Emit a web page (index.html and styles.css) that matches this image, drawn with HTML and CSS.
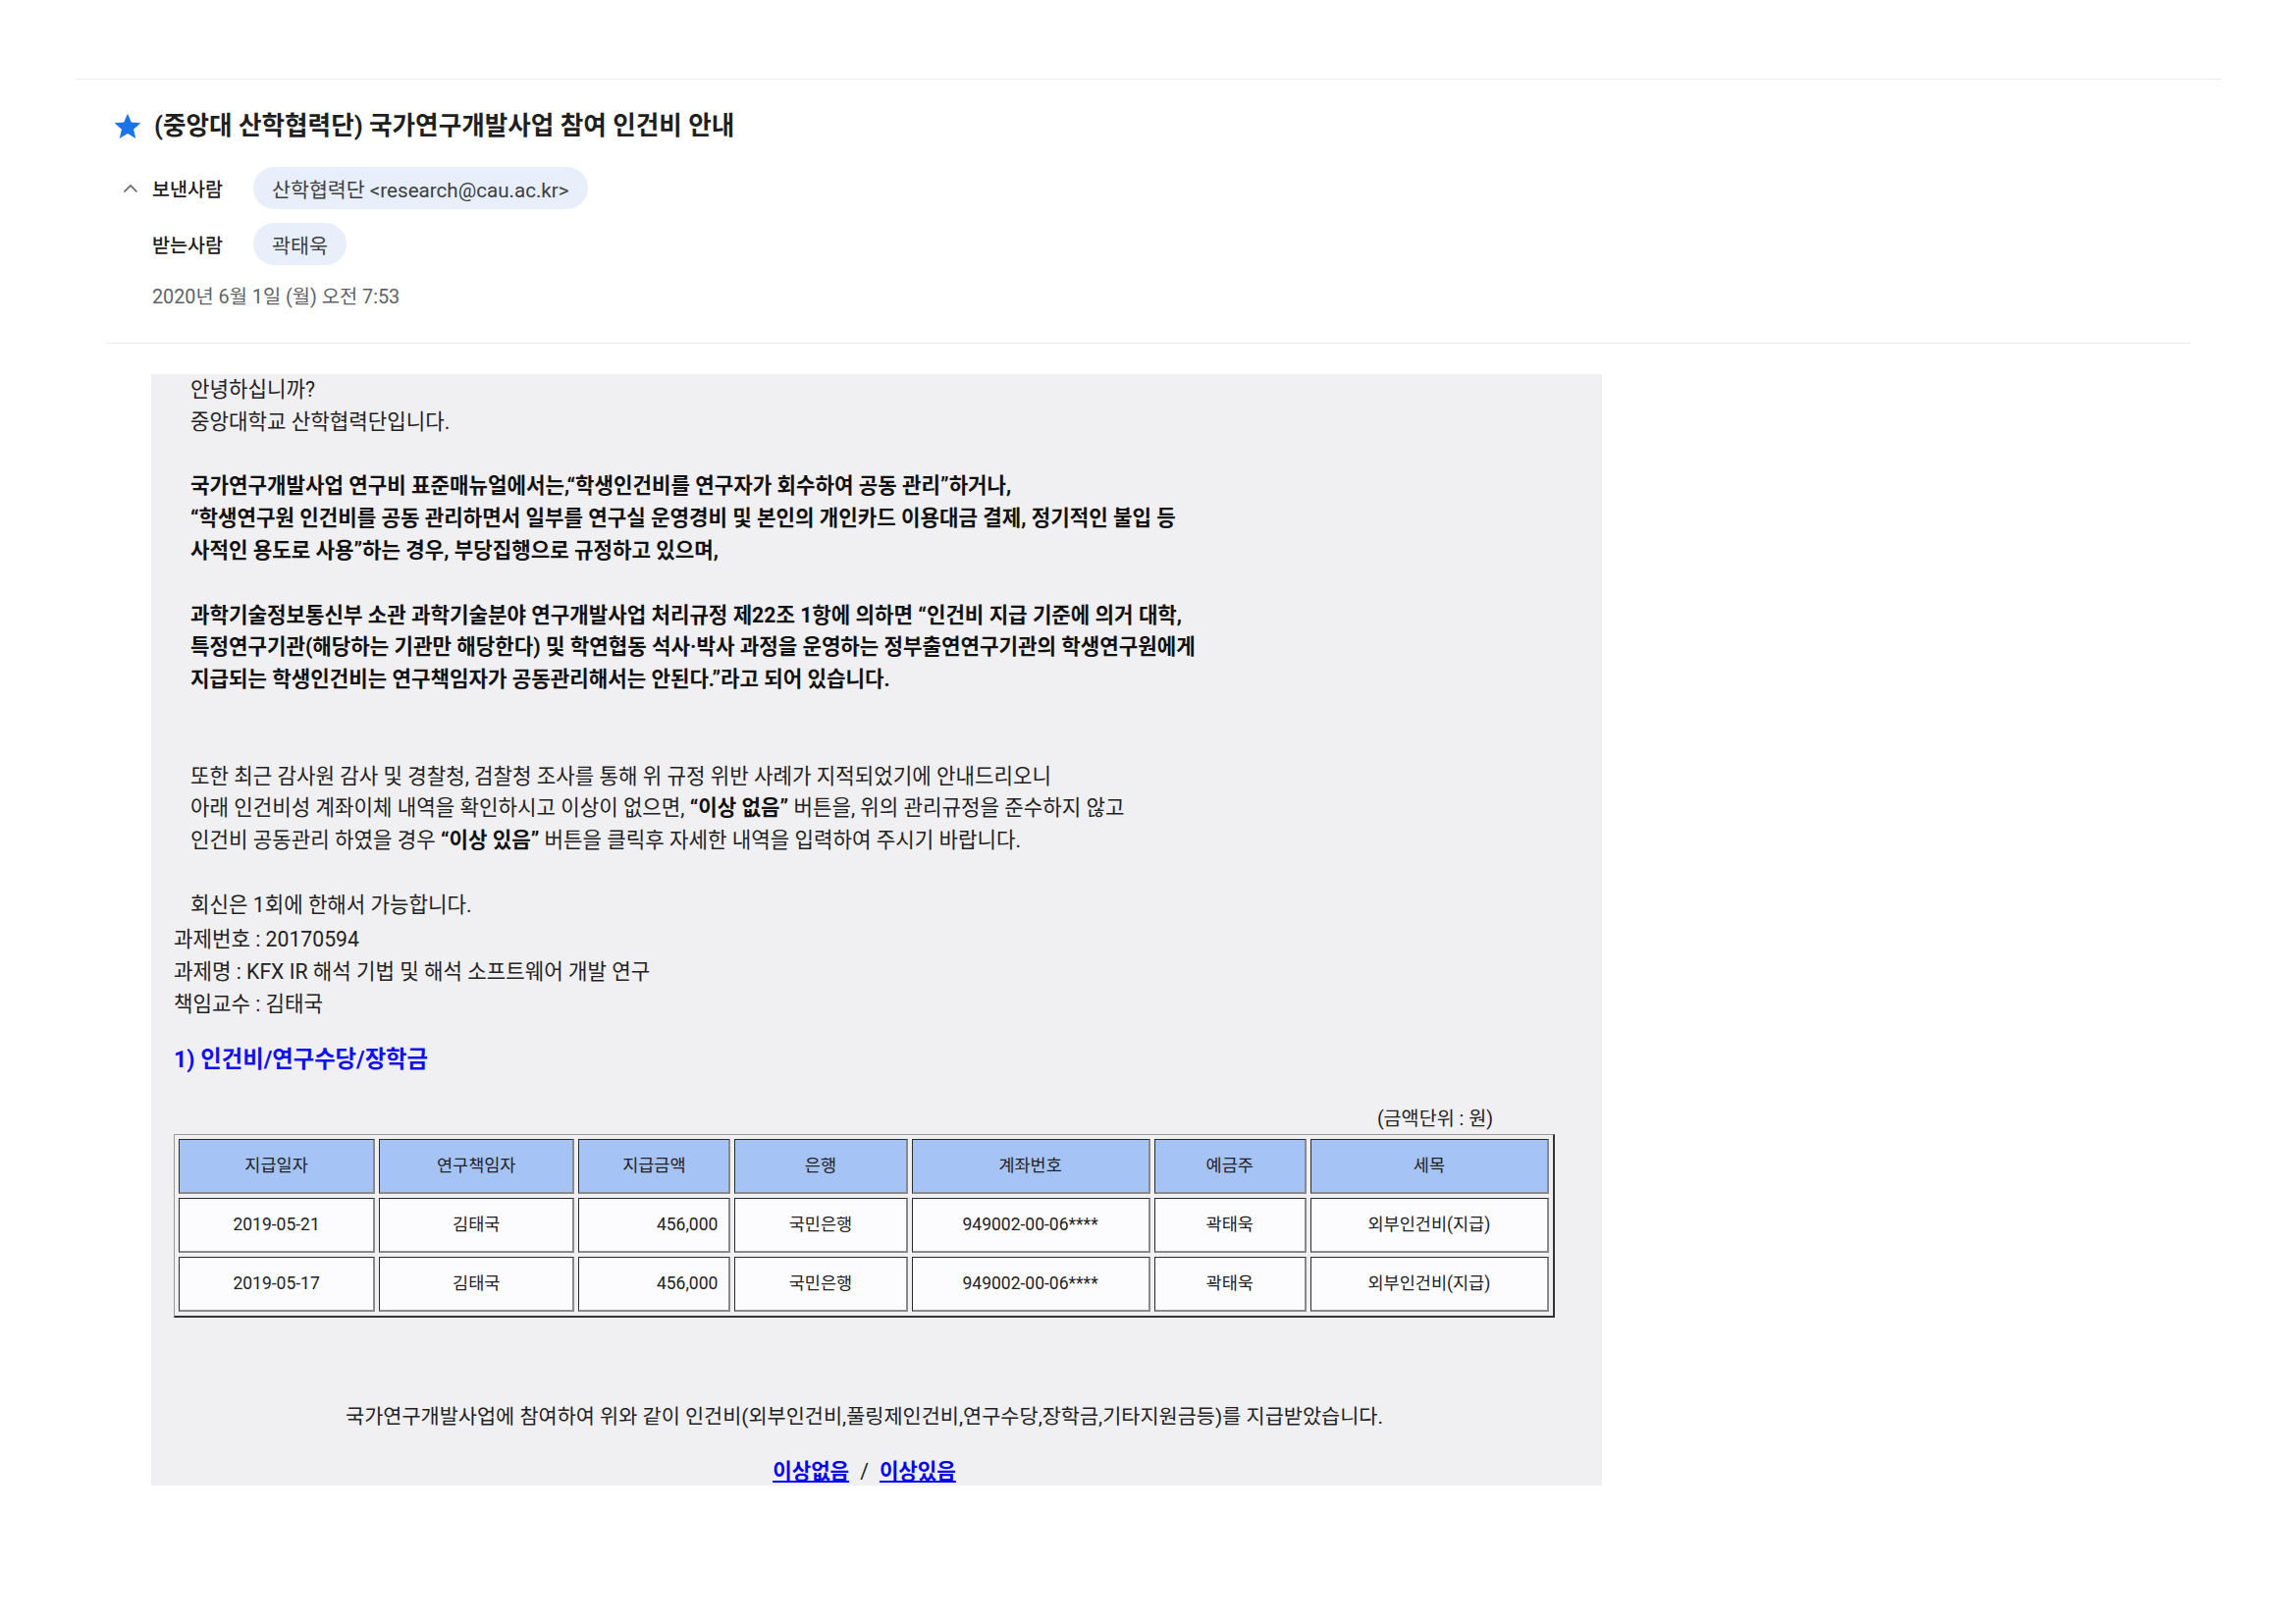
FILE: index.html
```html
<!DOCTYPE html>
<html lang="ko">
<head>
<meta charset="utf-8">
<title>(중앙대 산학협력단) 국가연구개발사업 참여 인건비 안내</title>
<link rel="stylesheet" href="styles.css">
</head>
<body>
<div class="rule-top"></div>
<header class="mail-head">
  <div class="subject-row">
    <svg class="star" viewBox="0 0 24 24" width="32" height="32" aria-hidden="true"><path d="M12 17.27L18.18 21l-1.64-7.03L22 9.24l-7.19-.61L12 2 9.19 8.63 2 9.240l5.46 4.73L5.82 21z" fill="#1a73e8"/></svg>
    <h1 class="subject">(중앙대 산학협력단) 국가연구개발사업 참여 인건비 안내</h1>
  </div>
  <div class="meta-row">
    <svg class="chev" viewBox="0 0 16 10" width="16" height="10" aria-hidden="true"><polyline points="1.5,8.5 8,2 14.5,8.5" fill="none" stroke="#5f6368" stroke-width="1.6"/></svg>
    <span class="meta-label">보낸사람</span>
    <span class="chip">산학협력단 &lt;research@cau.ac.kr&gt;</span>
  </div>
  <div class="meta-row second">
    <span class="chev-space"></span>
    <span class="meta-label">받는사람</span>
    <span class="chip">곽태욱</span>
  </div>
  <div class="date">2020년 6월 1일 (월) 오전 7:53</div>
</header>
<div class="rule-mid"></div>
<main class="mail-body">
  <div class="ind">
    안녕하십니까?<br>
    중앙대학교 산학협력단입니다.<br>
    <br>
    <b>국가연구개발사업 연구비 표준매뉴얼에서는,“학생인건비를 연구자가 회수하여 공동 관리”하거나,</b><br>
    <b>“학생연구원 인건비를 공동 관리하면서 일부를 연구실 운영경비 및 본인의 개인카드 이용대금 결제, 정기적인 불입 등</b><br>
    <b>사적인 용도로 사용”하는 경우, 부당집행으로 규정하고 있으며,</b><br>
    <br>
    <b>과학기술정보통신부 소관 과학기술분야 연구개발사업 처리규정 제22조 1항에 의하면 “인건비 지급 기준에 의거 대학,</b><br>
    <b>특정연구기관(해당하는 기관만 해당한다) 및 학연협동 석사·박사 과정을 운영하는 정부출연연구기관의 학생연구원에게</b><br>
    <b>지급되는 학생인건비는 연구책임자가 공동관리해서는 안된다.”라고 되어 있습니다.</b><br>
    <br>
    <br>
    또한 최근 감사원 감사 및 경찰청, 검찰청 조사를 통해 위 규정 위반 사례가 지적되었기에 안내드리오니<br>
    아래 인건비성 계좌이체 내역을 확인하시고 이상이 없으면, <b>“이상 없음”</b> 버튼을, 위의 관리규정을 준수하지 않고<br>
    인건비 공동관리 하였을 경우 <b>“이상 있음”</b> 버튼을 클릭후 자세한 내역을 입력하여 주시기 바랍니다.<br>
    <br>
    회신은 1회에 한해서 가능합니다.
  </div>
  <div class="info">
    과제번호 : 20170594<br>
    과제명 : KFX IR 해석 기법 및 해석 소프트웨어 개발 연구<br>
    책임교수 : 김태국
  </div>
  <h2 class="section-title">1) 인건비/연구수당/장학금</h2>
  <div class="table-wrap">
    <div class="unit">(금액단위 : 원)</div>
    <table class="pay">
      <colgroup>
        <col class="c-date"><col class="c-pi"><col class="c-amt"><col class="c-bank"><col class="c-acct"><col class="c-owner"><col class="c-item">
      </colgroup>
      <thead>
        <tr><th>지급일자</th><th>연구책임자</th><th>지급금액</th><th>은행</th><th>계좌번호</th><th>예금주</th><th>세목</th></tr>
      </thead>
      <tbody>
        <tr><td>2019-05-21</td><td>김태국</td><td class="num">456,000</td><td>국민은행</td><td>949002-00-06****</td><td>곽태욱</td><td>외부인건비(지급)</td></tr>
        <tr><td>2019-05-17</td><td>김태국</td><td class="num">456,000</td><td>국민은행</td><td>949002-00-06****</td><td>곽태욱</td><td>외부인건비(지급)</td></tr>
      </tbody>
    </table>
    <p class="confirm">국가연구개발사업에 참여하여 위와 같이 인건비(외부인건비,풀링제인건비,연구수당,장학금,기타지원금등)를 지급받았습니다.</p>
    <p class="actions"><a href="#" class="act">이상없음</a><span class="sep">/</span><a href="#" class="act">이상있음</a></p>
  </div>
</main>
</body>
</html>
```

FILE: styles.css
```css
html, body {
  margin: 0;
  padding: 0;
  background: #ffffff;
}

body {
  width: 2339px;
  font-family: Roboto, "Noto Sans CJK KR", sans-serif;
  color: #1f1f1f;
}

.rule-top {
  height: 1px;
  background: #ebebeb;
  margin: 80px 76px 0 77px;
}

.mail-head {
  margin-left: 114px;
  padding-top: 29px;
}

.subject-row {
  display: flex;
  align-items: center;
  gap: 11px;
  height: 36px;
}

.star {
  flex: none;
  display: block;
  margin-top: 2px;
}

.subject {
  margin: 0;
  font-size: 25.6px;
  line-height: 36px;
  font-weight: 700;
  color: #1f1f1f;
}

.meta-row {
  display: flex;
  align-items: center;
  height: 43px;
  margin-top: 24px;
  padding-left: 11px;
}

.meta-row.second {
  margin-top: 14px;
}

.chev, .chev-space {
  flex: none;
  display: block;
  width: 16px;
  height: 10px;
}

.meta-label {
  width: 103px;
  margin-left: 14px;
  font-size: 19.6px;
  font-weight: 500;
  color: #1f1f1f;
}

.chip {
  display: inline-flex;
  align-items: center;
  height: 43px;
  padding: 0 19px;
  border-radius: 22px;
  background: #e8eefa;
  font-size: 20.6px;
  color: #3c4043;
}

.date {
  margin-top: 19px;
  padding-left: 41px;
  font-size: 19.8px;
  line-height: 28px;
  color: #5f6368;
}

.rule-mid {
  height: 1px;
  background: #ebebeb;
  margin: 32px 107px 0 108px;
}

.mail-body {
  margin: 31px 0 0 154px;
  width: 1478px;
  height: 1132px;
  overflow: hidden;
  box-sizing: border-box;
  padding-left: 23px;
  background: #f0eff2;
  font-size: 21.2px;
  line-height: 32.8px;
  color: #222222;
}

.mail-body b {
  font-weight: 700;
  color: #111111;
}

.ind {
  padding-left: 17px;
}

.info {
  margin-top: 1px;
  line-height: 33px;
}

.section-title {
  margin: 24px 0 0 0;
  font-size: 23.3px;
  line-height: 33px;
  font-weight: 700;
  color: #1010ee;
}

.table-wrap {
  width: 1407px;
}

.unit {
  margin-top: 29px;
  padding-right: 63px;
  text-align: right;
  font-size: 19.6px;
  line-height: 30px;
  color: #222222;
}

.pay {
  margin-top: 0;
  width: 1407px;
  table-layout: fixed;
  border-collapse: separate;
  border-spacing: 4px;
  border-style: solid;
  border-width: 1px 2px 2px 1px;
  border-color: #9a9a9a #333333 #333333 #9a9a9a;
  font-size: 17.5px;
  color: #222222;
}

.c-date { width: 200px; }
.c-pi { width: 199px; }
.c-amt { width: 155px; }
.c-bank { width: 176px; }
.c-acct { width: 243px; }
.c-owner { width: 155px; }
.c-item { width: 243px; }

.pay th, .pay td {
  padding: 0 6px;
  line-height: 53px;
  text-align: center;
  font-weight: 400;
  white-space: nowrap;
  border-style: solid;
  border-width: 1px 2px 2px 1px;
  border-color: #2a2a2a #8a8a8a #8a8a8a #2a2a2a;
}

.pay th {
  background: #a6c3f5;
}

.pay td {
  background: #fcfcfe;
}

.pay td.num {
  text-align: right;
  padding-right: 11px;
}

.confirm {
  margin: 85px 0 0 0;
  text-align: center;
  font-size: 20.8px;
  line-height: 33px;
}

.actions {
  margin: 22px 0 0 0;
  text-align: center;
  line-height: 33px;
}

.act {
  font-weight: 700;
  color: #0000ee;
  text-decoration: underline;
}

.sep {
  margin: 0 11px;
  color: #222222;
}
```
